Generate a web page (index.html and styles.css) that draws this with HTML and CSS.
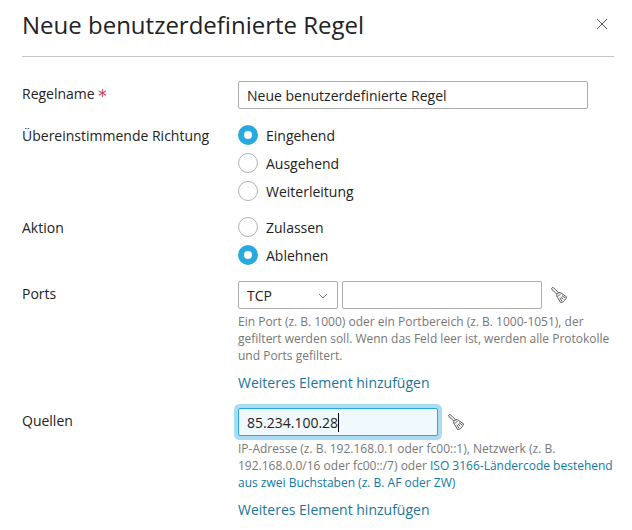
FILE: index.html
```
<!DOCTYPE html>
<html lang="de">
<head>
    <meta charset="UTF-8">
    <meta name="viewport" content="width=device-width, initial-scale=1.0">
    <title>Neue benutzerdefinierte Regel</title>
    <link rel="stylesheet" href="styles.css">
</head>
<body>
    <svg width="0" height="0" class="sprite">
        <symbol id="broom" viewBox="0 0 16 16">
            <path d="M6 7.2 L1 2.7 Q.1 1.5 1 .8 Q1.9 .2 2.8 1.1 L7.6 5.8"/>
            <path d="M5.9 7.5 Q6.3 5.9 8 5.6 Q9.5 5.3 10.6 6.4 L15.4 9.7 Q15.3 12 13.8 13.1 Q12.6 15.3 9.6 15.5 L6.6 10.5 Q5.3 9 5.9 7.5 Z"/>
            <path d="M6.9 9.6 L9.9 6.6 M8.9 10.8 L10.8 14 M10 9.8 L12.3 12.3 M11 8.7 L14 10.8"/>
        </symbol>
    </svg>
    <div class="dialog">
        <div class="header">
            <h1>Neue benutzerdefinierte Regel</h1>
            <button class="close" type="button" aria-label="Schließen">
                <svg width="12" height="12" viewBox="0 0 12 12"><path d="M1 1 L11 11 M11 1 L1 11"/></svg>
            </button>
        </div>

        <form class="form">
            <div class="row">
                <label class="label label-input" for="name">Regelname <span class="required">*</span></label>
                <input class="input input-name" id="name" type="text" value="Neue benutzerdefinierte Regel">
            </div>

            <div class="row">
                <div class="label">Übereinstimmende Richtung</div>
                <div class="radios">
                    <label class="radio"><input type="radio" name="direction" checked>Eingehend</label>
                    <label class="radio"><input type="radio" name="direction">Ausgehend</label>
                    <label class="radio"><input type="radio" name="direction">Weiterleitung</label>
                </div>
            </div>

            <div class="row">
                <div class="label">Aktion</div>
                <div class="radios">
                    <label class="radio"><input type="radio" name="action">Zulassen</label>
                    <label class="radio"><input type="radio" name="action" checked>Ablehnen</label>
                </div>
            </div>

            <div class="row">
                <div class="label label-input">Ports</div>
                <div class="field">
                    <div class="controls">
                        <button class="select" type="button">TCP
                            <svg width="10" height="6" viewBox="0 0 10 6"><path d="M1 1 L5 5 L9 1"/></svg>
                        </button>
                        <input class="input input-value" type="text">
                        <svg class="broom" width="16" height="16"><use href="#broom"/></svg>
                    </div>
                    <p class="hint">Ein Port (z. B. 1000) oder ein Portbereich (z. B. 1000-1051), der<br>gefiltert werden soll. Wenn das Feld leer ist, werden alle Protokolle<br>und Ports gefiltert.</p>
                    <a class="add">Weiteres Element hinzufügen</a>
                </div>
            </div>

            <div class="row">
                <div class="label label-input">Quellen</div>
                <div class="field">
                    <div class="controls">
                        <div class="input input-value focused">85.234.100.28<span class="caret"></span></div>
                        <svg class="broom" width="16" height="16"><use href="#broom"/></svg>
                    </div>
                    <p class="hint">IP-Adresse (z. B. 192.168.0.1 oder fc00::1), Netzwerk (z. B.<br>192.168.0.0/16 oder fc00::/7) oder <a>ISO 3166-Ländercode bestehend<br>aus zwei Buchstaben (z. B. AF oder ZW)</a></p>
                    <a class="add">Weiteres Element hinzufügen</a>
                </div>
            </div>
        </form>
    </div>
</body>
</html>
```
FILE: styles.css
```
* {
    box-sizing: border-box;
}
body {
    margin: 0;
    background: #fff;
    color: #222;
    font-family: "Open Sans", sans-serif;
    font-size: 14px;
    line-height: 20px;
    overflow: hidden;
}
.sprite {
    display: block;
}
.dialog {
    padding: 0 18px 0 22px;
}
/* Header */
.header {
    display: flex;
    justify-content: space-between;
    height: 57px;
    padding-top: 9px;
    border-bottom: 1px solid #c4c4c4;
}
h1 {
    margin: 0;
    font-size: 24px;
    font-weight: 400;
    line-height: 32px;
}
.close {
    width: 12px;
    height: 12px;
    margin: 9px 6px 0 0;
    padding: 0;
    border: none;
    background: none;
}
svg {
    display: block;
    fill: none;
    stroke: #555;
}
/* Form */
.form {
    display: flex;
    flex-direction: column;
    gap: 16px;
    padding-top: 24px;
}
.row {
    display: flex;
}
.label {
    width: 216px;
    flex: none;
    padding-top: 1px;
}
.label-input {
    padding-top: 3px;
}
.required {
    color: #d0344e;
    font-family: "DejaVu Sans", sans-serif;
    font-size: 17px;
    line-height: 1;
    vertical-align: -3px;
}
.input, .select {
    height: 28px;
    padding: 1px 8px 0;
    border: 1px solid #adadad;
    border-radius: 2px;
    background: #fff;
    color: #222;
    font: inherit;
    outline: none;
}
.input-name {
    width: 350px;
}
.input-value {
    width: 200px;
}
.select {
    display: flex;
    justify-content: space-between;
    align-items: center;
    width: 100px;
    margin-right: 4px;
    padding-right: 9px;
}
.select svg {
    stroke: #777;
}
.focused {
    display: flex;
    align-items: center;
    border-color: #28aade;
    background: #f0f9fe;
    box-shadow: 0 0 0 4px #aadcf2;
}
.caret {
    width: 1px;
    height: 19px;
    background: #000;
}
/* Radio buttons */
.radios {
    display: flex;
    flex-direction: column;
    gap: 8px;
}
.radio {
    display: flex;
    gap: 8px;
    height: 20px;
    line-height: 22px;
}
.radio input {
    appearance: none;
    width: 20px;
    height: 20px;
    margin: 0;
    border: 1px solid #b0b0b0;
    border-radius: 50%;
    background: #fff;
}
.radio input:checked {
    border: 6px solid #28aade;
}
.controls {
    display: flex;
}
.broom {
    margin: 6px 0 0 9px;
}
.focused + .broom {
    margin-left: 10px;
}
.hint {
    margin: 4px 0 9px;
    color: #777;
    font-size: 12px;
    line-height: 17px;
    white-space: nowrap;
}
.hint a {
    color: #0f7ba3;
}
.add {
    display: block;
    height: 19px;
    color: #1c7599;
}
```
